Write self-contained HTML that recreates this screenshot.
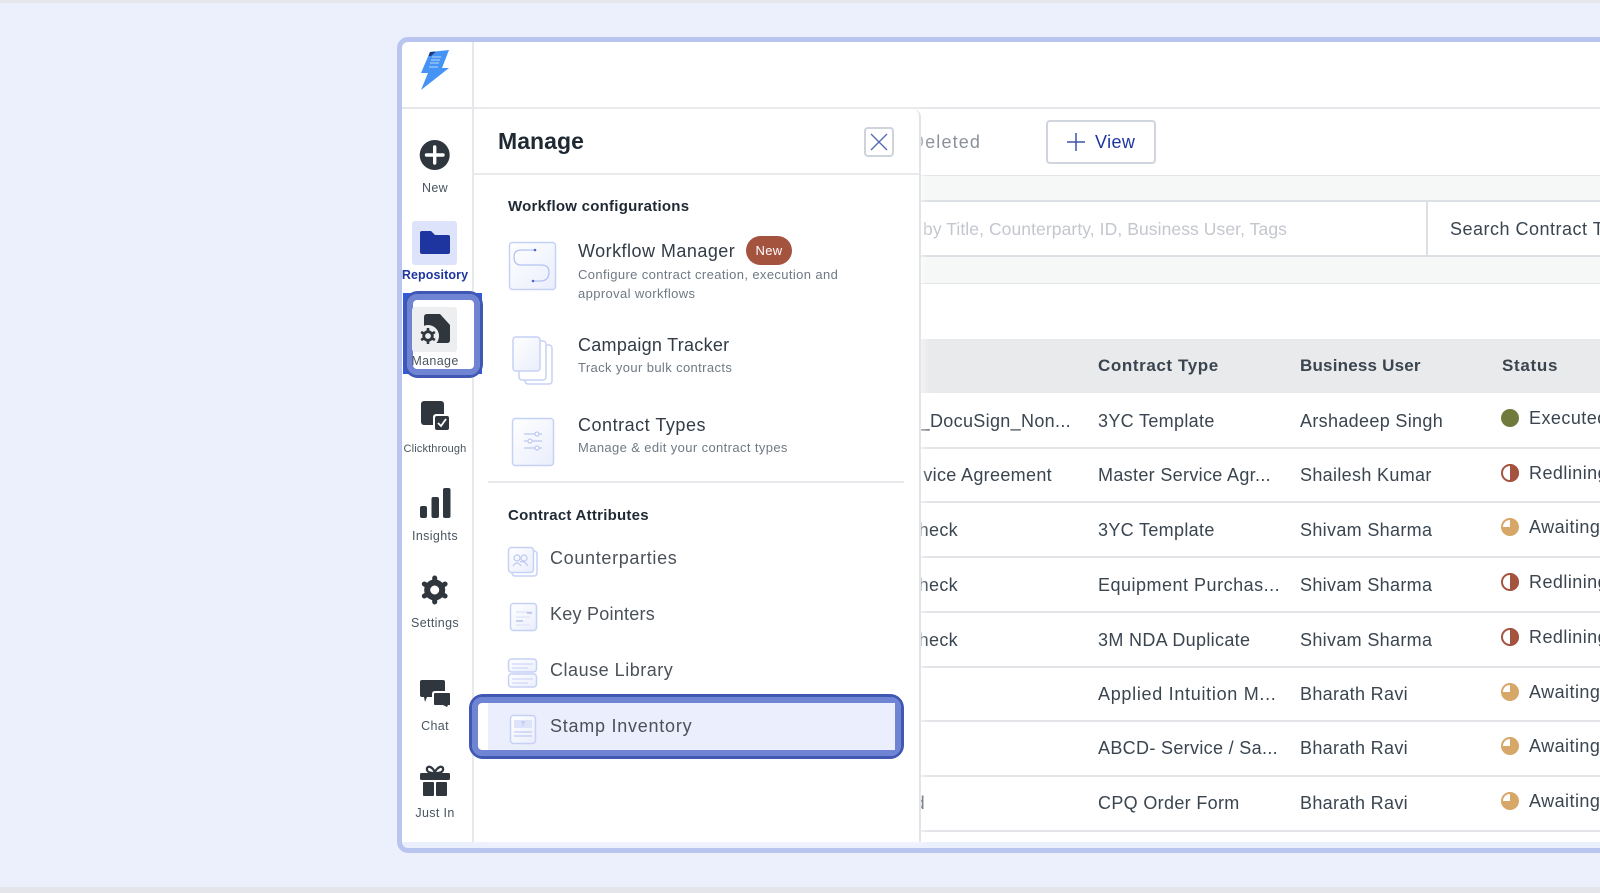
<!DOCTYPE html>
<html><head><meta charset="utf-8"><style>
html,body{margin:0;padding:0;width:1600px;height:893px;overflow:hidden;background:#ecf0fd;font-family:"Liberation Sans",sans-serif;color:#3a4550}
#w{position:absolute;left:0;top:0;width:1600px;height:893px;overflow:hidden;filter:blur(.35px)}
.a{position:absolute}
.t{position:absolute;white-space:nowrap;line-height:20px;height:20px;font-size:18px;letter-spacing:.33px}
.s{font-size:12.5px;letter-spacing:.35px;color:#4a5560;left:391px;width:88px;text-align:center}
.d{font-size:13px;letter-spacing:.38px;color:#6f7984;left:578px}
.h{font-size:15px;font-weight:bold;color:#1f2933;left:508px;letter-spacing:.25px}
.th{font-size:17px;font-weight:bold;color:#3a4550;letter-spacing:.2px}
.tl{left:1098px}.bu{left:1300px}.st{left:1529px;letter-spacing:.45px}
.r{text-align:right;right:529px}
.ln{position:absolute;left:919px;width:681px;height:2px;background:#e2e4e8}
</style></head><body><div id="w">
<div class="a" style="left:0;top:0;width:1600px;height:3px;background:#e6e7ec"></div>
<div class="a" style="left:0;top:887px;width:1600px;height:6px;background:#e4e5ea"></div>
<div class="a" style="left:397px;top:37px;width:1300px;height:816px;box-sizing:border-box;border:5px solid #b9c5ef;border-radius:11px;background:#ecf0fd"></div>
<div class="a" style="left:402px;top:42px;width:1198px;height:800px;background:#fff;border-top-left-radius:6px"></div>
<div class="a" style="left:472px;top:42px;width:2px;height:800px;background:#e6e7ea"></div>
<div class="a" style="left:402px;top:107px;width:1198px;height:2px;background:#e6e7ea"></div>

<!-- main content -->
<div class="t" style="left:911px;top:132px;color:#8a9099;letter-spacing:1.15px">Deleted</div>
<div class="a" style="left:1046px;top:120px;width:110px;height:44px;box-sizing:border-box;border:2px solid #d0d5dd;border-radius:4px;background:#fff"></div>
<div class="t" style="left:1095px;top:132px;color:#1e35a0;letter-spacing:.4px">View</div>
<div class="a" style="left:919px;top:175px;width:681px;height:109px;background:#f6f7f7"></div>
<div class="a" style="left:919px;top:175px;width:681px;height:1px;background:#e2e4e8"></div>
<div class="a" style="left:919px;top:200px;width:681px;height:57px;box-sizing:border-box;border-top:2px solid #dcdfe3;border-bottom:2px solid #dcdfe3;background:#fff"></div>
<div class="a" style="left:919px;top:283px;width:681px;height:1px;background:#e2e4e8"></div>
<div class="t" style="left:923px;top:219px;color:#c3c7cd;font-size:17.5px;letter-spacing:.08px">by Title, Counterparty, ID, Business User, Tags</div>
<div class="a" style="left:1426px;top:201px;width:2px;height:55px;background:#dcdfe3"></div>
<div class="t" style="left:1450px;top:219px;color:#3a4550;letter-spacing:.5px">Search Contract T</div>

<div class="a" style="left:919px;top:339px;width:681px;height:54px;background:#e9eaec"></div>
<div class="t th tl" style="top:356px;letter-spacing:.6px">Contract Type</div><div class="t th bu" style="top:356px">Business User</div><div class="t th" style="left:1502px;top:356px;letter-spacing:.7px">Status</div>
<div class="ln" style="top:447px"></div><div class="ln" style="top:501px"></div><div class="ln" style="top:556px"></div><div class="ln" style="top:611px"></div><div class="ln" style="top:666px"></div><div class="ln" style="top:720px"></div><div class="ln" style="top:775px"></div><div class="ln" style="top:830px"></div>

<div class="t r" style="top:411px">n_DocuSign_Non...</div><div class="t tl" style="top:411px">3YC Template</div><div class="t bu" style="top:411px">Arshadeep Singh</div><div class="t st" style="top:408px">Executed</div>
<div class="t r" style="top:465px;right:548px">vice Agreement</div><div class="t tl" style="top:465px">Master Service Agr...</div><div class="t bu" style="top:465px">Shailesh Kumar</div><div class="t st" style="top:463px">Redlining</div>
<div class="t r" style="top:520px;right:642px">heck</div><div class="t tl" style="top:520px">3YC Template</div><div class="t bu" style="top:520px">Shivam Sharma</div><div class="t st" style="top:517px">Awaiting</div>
<div class="t r" style="top:575px;right:642px">heck</div><div class="t tl" style="top:575px;letter-spacing:.5px">Equipment Purchas...</div><div class="t bu" style="top:575px">Shivam Sharma</div><div class="t st" style="top:572px">Redlining</div>
<div class="t r" style="top:630px;right:642px">heck</div><div class="t tl" style="top:630px">3M NDA Duplicate</div><div class="t bu" style="top:630px">Shivam Sharma</div><div class="t st" style="top:627px">Redlining</div>
<div class="t tl" style="top:684px;letter-spacing:.7px">Applied Intuition M...</div><div class="t bu" style="top:684px">Bharath Ravi</div><div class="t st" style="top:682px">Awaiting</div>
<div class="t tl" style="top:738px">ABCD- Service / Sa...</div><div class="t bu" style="top:738px">Bharath Ravi</div><div class="t st" style="top:736px">Awaiting</div>
<div class="t r" style="top:793px;right:675px">d</div><div class="t tl" style="top:793px">CPQ Order Form</div><div class="t bu" style="top:793px">Bharath Ravi</div><div class="t st" style="top:791px">Awaiting</div>

<!-- manage panel -->
<div class="a" style="left:474px;top:109px;width:445px;height:733px;background:#fff;border-right:2px solid #e3e4e8;border-top-right-radius:8px;box-shadow:3px 0 8px rgba(255,255,255,.5)"></div>
<div class="a" style="left:474px;top:173px;width:445px;height:2px;background:#e9eaec"></div>
<div class="t" style="left:498px;top:131px;font-size:23px;font-weight:bold;color:#1f2933;letter-spacing:.05px">Manage</div>
<div class="a" style="left:864px;top:127px;width:30px;height:30px;box-sizing:border-box;border:2px solid #cfd3dc;border-radius:4px;background:#fff"></div>

<!-- highlight bars -->
<div class="a" style="left:403px;top:293px;width:79px;height:81px;background:#2f5be0"></div>
<div class="a" style="left:404px;top:291px;width:79px;height:87px;box-sizing:border-box;border:3px solid #4057b3;border-radius:14px;background:#fff"></div>
<div class="a" style="left:407px;top:294px;width:73px;height:81px;box-sizing:border-box;border:6px solid #6f84d3;border-radius:10px;background:#fff"></div>
<div class="a" style="left:412px;top:307px;width:45px;height:45px;background:#edeeef;border-radius:3px"></div>
<div class="a" style="left:412px;top:221px;width:45px;height:44px;background:#dce3fa;border-radius:3px"></div>

<div class="a" style="left:469px;top:694px;width:435px;height:65px;box-sizing:border-box;border:3px solid #4057b3;border-radius:14px;background:#fff"></div>
<div class="a" style="left:472px;top:697px;width:429px;height:59px;box-sizing:border-box;border:6px solid #6f84d3;border-radius:10px;background:#fff"></div>
<div class="a" style="left:488px;top:703px;width:407px;height:47px;background:#ebeefc"></div>
<div class="a" style="left:488px;top:481px;width:416px;height:2px;background:#e8e9ec"></div>

<!-- sidebar labels -->
<div class="t s" style="top:178px">New</div>
<div class="t s" style="top:265px;font-weight:bold;color:#1e35a0;letter-spacing:.1px">Repository</div>
<div class="t s" style="top:351px">Manage</div>
<div class="t s" style="top:439px;font-size:11px;letter-spacing:.15px">Clickthrough</div>
<div class="t s" style="top:526px">Insights</div>
<div class="t s" style="top:613px">Settings</div>
<div class="t s" style="top:716px">Chat</div>
<div class="t s" style="top:803px">Just In</div>

<!-- panel text -->
<div class="t h" style="top:197px">Workflow configurations</div>
<div class="t" style="left:578px;top:241px;color:#323c46;letter-spacing:.47px">Workflow Manager</div>
<div class="a" style="left:746px;top:236px;width:46px;height:29px;background:#a4533f;border-radius:15px;color:#fff;font-size:13px;line-height:29px;text-align:center;letter-spacing:.3px">New</div>
<div class="t d" style="top:265px">Configure contract creation, execution and</div>
<div class="t d" style="top:284px">approval workflows</div>
<div class="t" style="left:578px;top:335px;color:#323c46;letter-spacing:.27px">Campaign Tracker</div>
<div class="t d" style="top:358px">Track your bulk contracts</div>
<div class="t" style="left:578px;top:415px;color:#323c46;letter-spacing:.52px">Contract Types</div>
<div class="t d" style="top:438px">Manage &amp; edit your contract types</div>
<div class="t h" style="top:506px">Contract Attributes</div>
<div class="t" style="left:550px;top:548px;color:#4a5158;letter-spacing:.67px">Counterparties</div>
<div class="t" style="left:550px;top:604px;color:#4a5158;letter-spacing:.25px">Key Pointers</div>
<div class="t" style="left:550px;top:660px;color:#4a5158;letter-spacing:.52px">Clause Library</div>
<div class="t" style="left:550px;top:716px;color:#4a5158;letter-spacing:.75px">Stamp Inventory</div>

<!-- all icons -->
<svg class="a" style="left:0;top:0" width="1600" height="893" viewBox="0 0 1600 893">
<defs><linearGradient id="g" x1="0" y1="0" x2="1" y2="1"><stop offset="0" stop-color="#fff"/><stop offset="1" stop-color="#eaeefc"/></linearGradient></defs>
<!-- logo -->
<path d="M430 52L449 50L442 68L449 68L421 90L428 73L421 73Z" fill="#4493f5"/>
<path d="M430 52L436 51.500L431 56L428.500 56Z" fill="#1d3a78"/>
<path d="M432 57H441M431 60H440M430 63H439M429 67H438" stroke="#bcd8fb" stroke-width="1"/>
<!-- new -->
<circle cx="434.700" cy="155" r="15" fill="#2f363d"/><path d="M426.500 155H443M434.700 147V163" stroke="#fff" stroke-width="3.400" stroke-linecap="round"/>
<!-- folder -->
<path d="M422 231H431L435 235H448Q450 235 450 237V252Q450 254 448 254H422Q420 254 420 252V233Q420 231 422 231Z" fill="#1e35a0"/>
<!-- manage -->
<path d="M427 314H440L450 325V340Q450 343 447 343H424V317Q424 314 427 314Z" fill="#2f363d"/>
<circle cx="428" cy="336" r="11" fill="#edeeef"/>
<g transform="translate(428,336)"><circle r="4.300" fill="none" stroke="#2f363d" stroke-width="2.800"/><path d="M0-8V-5M0 8V5M-6.900-4L-4.300-2.500M6.900-4L4.300-2.500M-6.900 4L-4.300 2.500M6.900 4L4.300 2.500" stroke="#2f363d" stroke-width="2.600"/></g>
<!-- clickthrough -->
<rect x="421" y="401" width="23" height="24" rx="3" fill="#2f363d"/><rect x="433" y="414" width="17" height="17" rx="3" fill="#fff"/><rect x="435" y="416" width="14" height="14" rx="2" fill="#2f363d"/><path d="M438 423L441 426L446 419" fill="none" stroke="#fff" stroke-width="1.800"/>
<!-- insights -->
<rect x="420" y="506" width="7" height="12" rx="2" fill="#2f363d"/><rect x="431.500" y="497" width="7.500" height="21" rx="2" fill="#2f363d"/><rect x="443" y="488" width="7.500" height="30" rx="2" fill="#2f363d"/>
<!-- settings -->
<g transform="translate(434.700,590)"><circle r="7.500" fill="none" stroke="#2f363d" stroke-width="6"/><path d="M0-12V-9M0 12V9M-10.400-6L-7.800-4.500M10.400-6L7.800-4.500M-10.400 6L-7.800 4.500M10.400 6L7.800 4.500" stroke="#2f363d" stroke-width="5" stroke-linecap="round"/></g>
<!-- chat -->
<path d="M422 680H443Q445 680 445 682V691H435Q432 691 432 694V697H427L425 702L424 697H422Q420 697 420 695V682Q420 680 422 680Z" fill="#2f363d"/>
<path d="M435 693H449Q450 693 450 694V705H448L447 707L443 705H435Q434 705 434 704V694Q434 693 435 693Z" fill="#2f363d"/>
<!-- gift -->
<rect x="420" y="773" width="30" height="7" rx="1.500" fill="#2f363d"/><rect x="423" y="782" width="11" height="14" rx="1" fill="#2f363d"/><rect x="436" y="782" width="11" height="14" rx="1" fill="#2f363d"/>
<path d="M434 773Q426 773 427 768Q429 765 433 769Q434.500 771 434.700 773Q435 771 437 769Q441 765 443 768Q444 773 436 773" fill="none" stroke="#2f363d" stroke-width="2.200"/>
<!-- close -->
<path d="M871 134L887 150M887 134L871 150" stroke="#5068b8" stroke-width="1.300"/>
<!-- view plus -->
<path d="M1067 142H1085M1076 133V151" stroke="#3f55a8" stroke-width="1.500"/>
<!-- workflow manager icon -->
<g stroke="#c6d1f6" stroke-width="1.500" fill="url(#g)">
<rect x="509.500" y="242.500" width="46" height="47" rx="3"/>
<rect x="525" y="345" width="27" height="39" rx="3" fill="#fff"/><rect x="519" y="341" width="27" height="39" rx="3" fill="#fff"/><rect x="513" y="337" width="27" height="34" rx="3"/>
<rect x="512.500" y="418.500" width="41" height="47" rx="3"/>
<rect x="512" y="551" width="25" height="25" rx="3" fill="#fff"/><rect x="508.500" y="547.500" width="25" height="25" rx="3"/>
<rect x="510.500" y="603.500" width="26" height="27" rx="3"/>
<rect x="508.500" y="659" width="28" height="13" rx="3"/><rect x="508.500" y="674" width="28" height="13" rx="3"/>
<rect x="510.500" y="715.500" width="25" height="28" rx="3"/>
</g>
<path d="M535 250H521Q514 250 514 257Q514 265 521 265H541Q549 265 549 272Q549 281 540 281H533" fill="none" stroke="#b4c2f2" stroke-width="1.300"/>
<circle cx="535" cy="250" r="1.300" fill="#5068c8"/><circle cx="533" cy="281" r="1.300" fill="#5068c8"/>
<g stroke="#bcc8f2" stroke-width="1.200" fill="#fff"><path d="M524 434H542M524 441H542M524 448H542"/><circle cx="537" cy="434" r="2"/><circle cx="530" cy="441" r="2"/><circle cx="537" cy="448" r="2"/></g>
<g fill="none" stroke="#bcc8f2" stroke-width="1.200"><circle cx="517" cy="558" r="3"/><circle cx="524" cy="558" r="3"/><path d="M513 566Q517 560 521 566M520 562Q524 560 528 566"/></g>
<path d="M516 612H532M516 617H530M516 625H530" stroke="#dfe4f8" stroke-width="1.200"/><path d="M527 613H532M516 621H523" stroke="#9aa8e0" stroke-width="1"/>
<path d="M512 664H533M512 668H528M512 679H533M512 683H528" stroke="#d0d8f7" stroke-width="1.200"/>
<rect x="514" y="720" width="18" height="8" fill="#dde3fa"/><path d="M521 722H525M523 722V726M514 732H532M514 736H532" stroke="#b5c0ec" stroke-width="1"/>
<!-- status dots -->
<circle cx="1510" cy="418" r="9" fill="#717a3d"/>
<g fill="#a4533f"><circle cx="1510" cy="473" r="8" fill="#fff" stroke="#a4533f" stroke-width="2"/><path d="M1510 464A9 9 0 0 1 1510 482Z"/></g>
<g><circle cx="1510" cy="527" r="9" fill="#d6a767"/><path d="M1510 527V520A7 7 0 0 0 1503 527Z" fill="#fff"/></g>
<g fill="#a4533f"><circle cx="1510" cy="582" r="8" fill="#fff" stroke="#a4533f" stroke-width="2"/><path d="M1510 573A9 9 0 0 1 1510 591Z"/></g>
<g fill="#a4533f"><circle cx="1510" cy="637" r="8" fill="#fff" stroke="#a4533f" stroke-width="2"/><path d="M1510 628A9 9 0 0 1 1510 646Z"/></g>
<g><circle cx="1510" cy="692" r="9" fill="#d6a767"/><path d="M1510 692V685A7 7 0 0 0 1503 692Z" fill="#fff"/></g>
<g><circle cx="1510" cy="746" r="9" fill="#d6a767"/><path d="M1510 746V739A7 7 0 0 0 1503 746Z" fill="#fff"/></g>
<g><circle cx="1510" cy="801" r="9" fill="#d6a767"/><path d="M1510 801V794A7 7 0 0 0 1503 801Z" fill="#fff"/></g>
</svg>
</div></body></html>
